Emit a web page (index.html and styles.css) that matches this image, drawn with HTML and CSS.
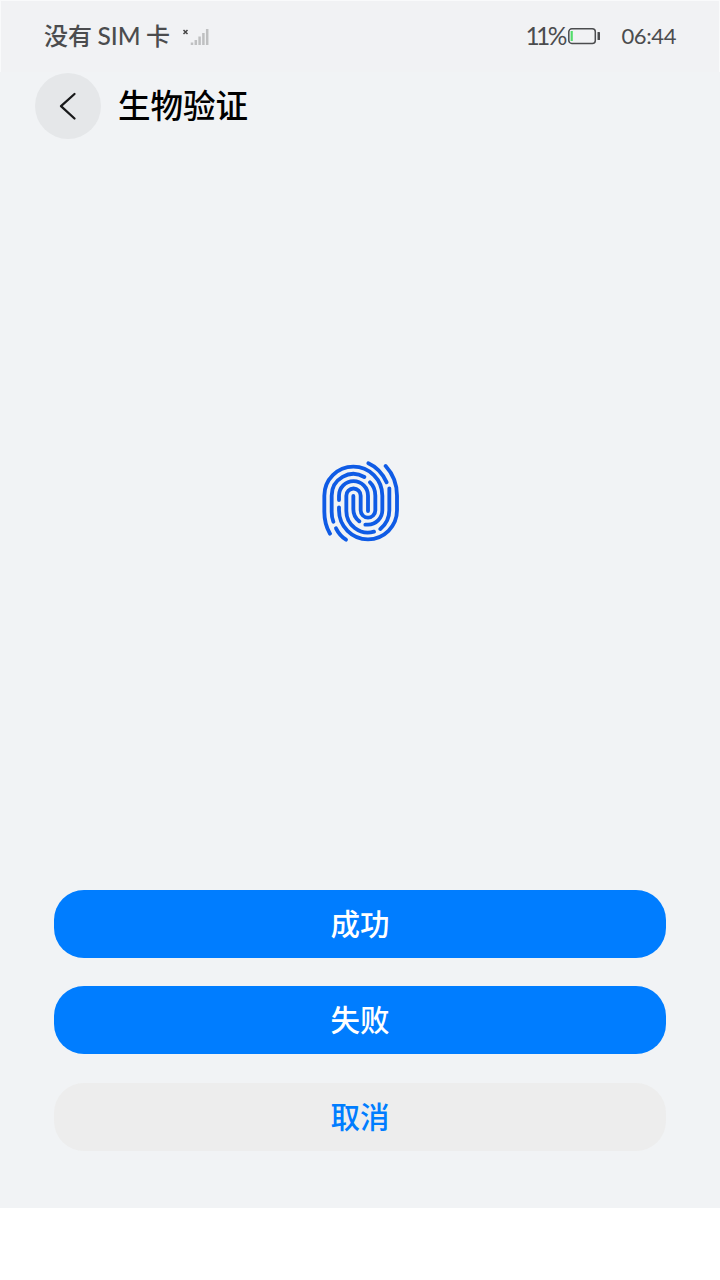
FILE: index.html
```html
<!DOCTYPE html>
<html lang="zh-CN">
<head>
<meta charset="utf-8">
<title>生物验证</title>
<link rel="stylesheet" href="styles.css">
</head>
<body>
<div class="screen">
  <header class="status">
    <span class="carrier">没有 <span class="sim">SIM</span> 卡</span>
    <svg class="signal" width="28" height="20" viewBox="0 0 28 20">
      <path d="M1.500 3l4 4M5.500 3l-4 4" stroke="#444" stroke-width="1.500"/>
      <path d="M10 15.500v2.500M13.800 13v5M17.600 9.500v8.500M21.400 6v12M25.200 2v16" stroke="#bfc0c1" stroke-width="2.500"/>
    </svg>
    <span class="percent"><span class="digits">11</span>%</span>
    <svg class="battery" width="34" height="18" viewBox="0 0 34 18">
      <rect x="1.800" y="1.800" width="26.500" height="14.600" rx="3" fill="none" stroke="#4b4c4e" stroke-width="1.500"/>
      <rect x="3.600" y="4" width="2.200" height="10" fill="#53dc6b"/>
      <rect x="30.500" y="5" width="2.500" height="8" rx=".6" fill="#4b4c4e"/>
    </svg>
    <time class="clock">06:44</time>
  </header>
  <div class="titlebar">
    <button class="back" aria-label="返回">
      <svg width="66" height="66" viewBox="0 0 66 66" fill="none" stroke="#18191a" stroke-width="2.300" stroke-linecap="round" stroke-linejoin="round"><path d="M39.500 21L26 33.200L39.500 45.500"/></svg>
    </button>
    <h1 class="title">生物验证</h1>
  </div>
  <main class="scan">
    <svg class="finger" width="100" height="100" viewBox="0 0 300 300" fill="none" stroke="#0f5be5" stroke-width="11.500" stroke-linecap="round" stroke-linejoin="round">
      <path d="M60 251Q43 222 43 185V137A87 87 0 0 1 217 137V181A43 43 0 0 1 174 224H166"/>
      <path d="M70 215Q65 202 65 185V137A65 65 0 0 1 163 81"/>
      <path d="M87 150V137A43 43 0 0 1 174 137V183"/>
      <path d="M87 172V181A87 87 0 0 0 261 181V137Q261 85 227 48"/>
      <path d="M192 245A65 65 0 0 1 109 181V137A21.500 21.500 0 0 1 152 137V181A22 22 0 0 0 196 181V137Q196 112 180 97"/>
      <path d="M130 138V178Q130 201 148 214"/>
      <path d="M238 115V181Q238 215 211 237"/>
      <path d="M175 40Q211 56 230 97"/>
      <path d="M78 235Q89 257 108 269"/>
    </svg>
  </main>
  <div class="actions">
    <button class="btn">成功</button>
    <button class="btn">失败</button>
    <button class="btn cancel">取消</button>
  </div>
</div>
</body>
</html>
```
FILE: styles.css
```css
* { box-sizing: border-box; }
body {
  margin: 0;
  background: #fff;
  font-family: "Noto Sans CJK SC", sans-serif;
}
.screen {
  display: flex;
  flex-direction: column;
  width: 720px;
  height: 1208px;
  background: #f1f3f5;
}
.status {
  display: flex;
  align-items: center;
  height: 72px;
  padding: 0 43px 3px 44px;
  border: 1px solid #f9fafb;
  border-bottom: 0;
  background: #f1f2f4;
  color: #4b4c4e;
  line-height: 36px;
}
.carrier { font-size: 24px; font-weight: 500; white-space: pre; margin-left: -1px; }
.sim { font-family: Lato, sans-serif; font-size: 24.500px; }
.signal { margin: 3px 0 0 12px; }
.percent { margin-left: auto; padding-top: 1px; font: 24.500px/36px Lato, sans-serif; }
.digits { letter-spacing: -3.500px; margin-right: 1px; }
.battery { margin: 2px 0 0 0; }
.clock { margin-left: 20px; padding-top: 1px; font: 22px/36px Lato, sans-serif; letter-spacing: -.4px; }
.titlebar {
  display: flex;
  align-items: center;
  gap: 17px;
  height: 68px;
  padding: 0 35px;
}
.back {
  width: 66px;
  height: 66px;
  padding: 0;
  border: 0;
  border-radius: 50%;
  background: #e5e7e9;
}
.back svg { display: block; }
.title { margin: 0; padding-bottom: 4px; font-size: 32.500px; font-weight: 500; line-height: 48px; color: #000; }
.scan {
  flex: 1;
  display: flex;
  justify-content: center;
  padding-top: 310px;
}
.actions {
  display: flex;
  flex-direction: column;
  gap: 28px;
  padding: 0 54px 57px;
}
.btn {
  height: 68px;
  padding: 0 0 4px;
  border: 0;
  border-radius: 30px;
  background: #007dff;
  color: #fff;
  font: 500 29.500px/64px "Noto Sans CJK SC", sans-serif;
}
.cancel { margin-top: 1px; background: #ededed; color: #007dff; }
```
